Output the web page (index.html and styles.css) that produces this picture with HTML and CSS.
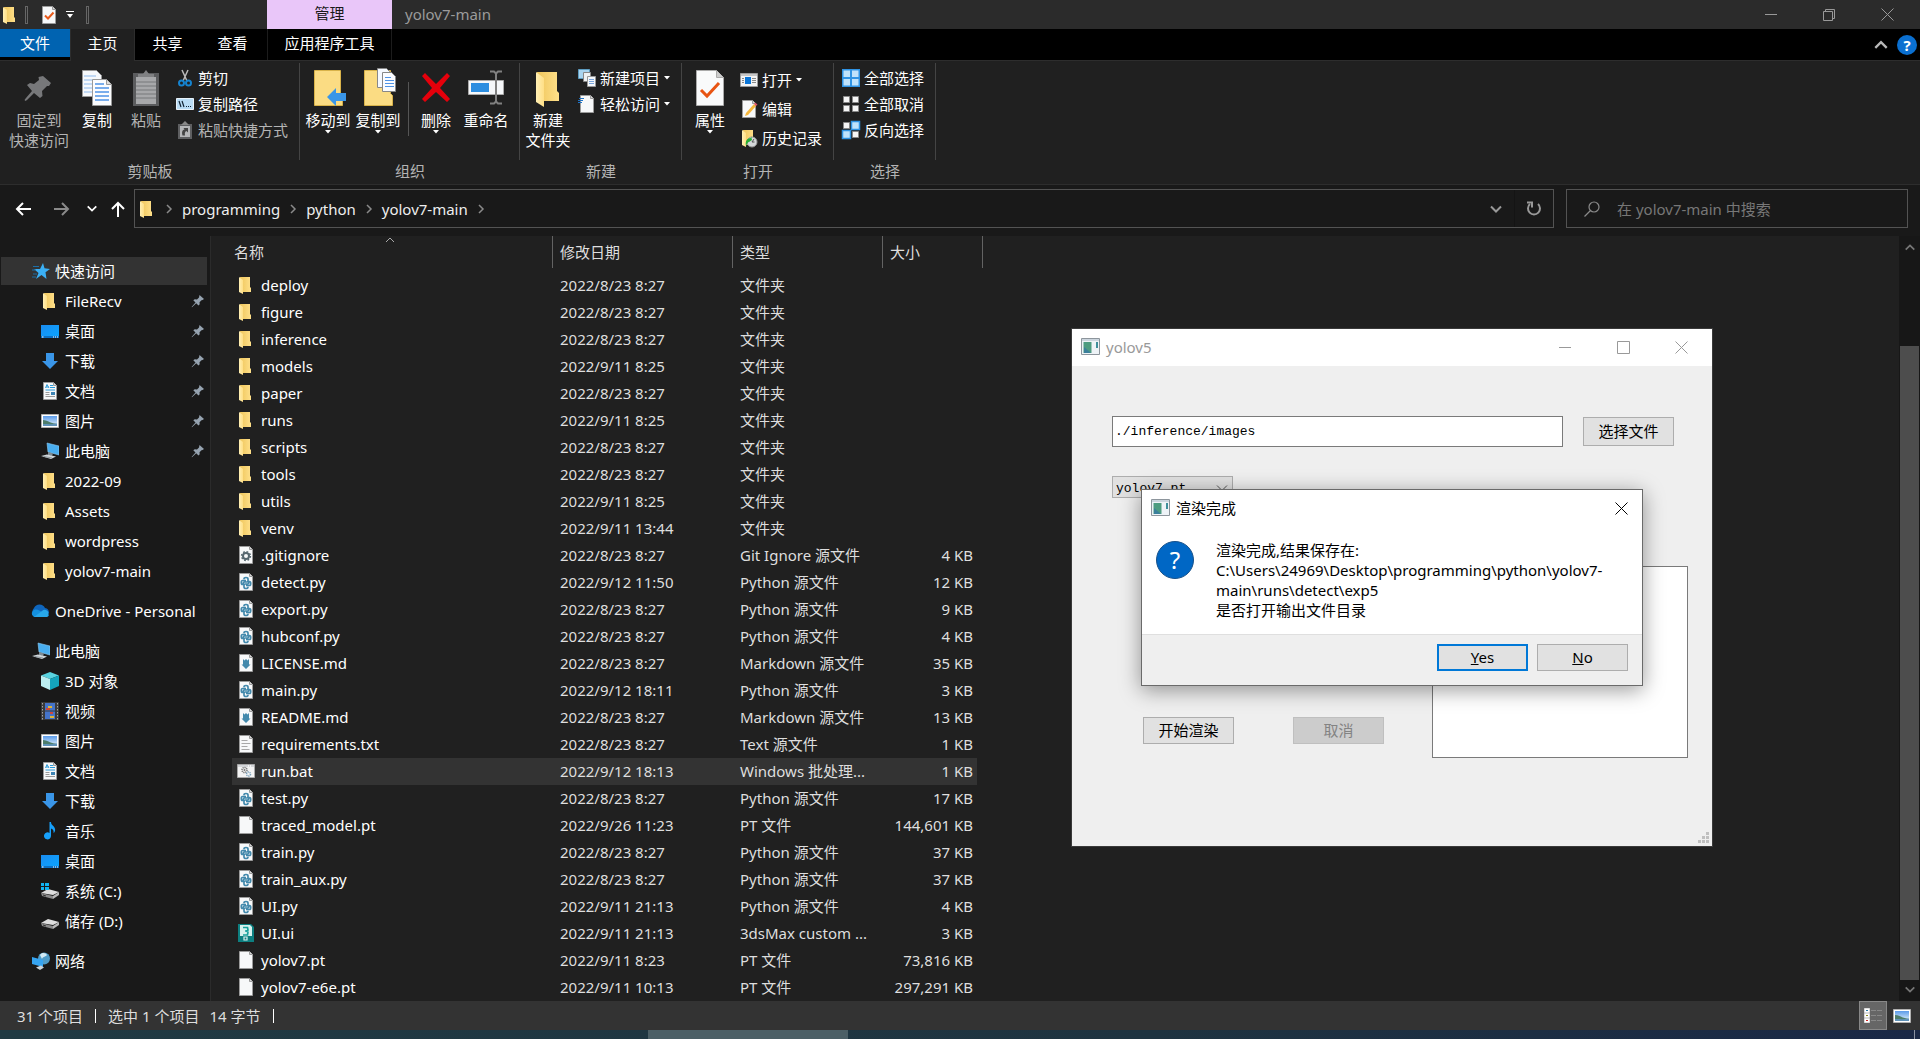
FILE: index.html
```html
<!DOCTYPE html>
<html lang="zh-CN">
<head>
    <meta charset="UTF-8">
    <meta name="viewport" content="width=device-width, initial-scale=1.0">
    <title>yolov7-main</title>
    <link rel="stylesheet" href="styles.css">
</head>
<body>
    <!-- icon sprite -->
    <svg class="sprite" aria-hidden="true">
        <defs>
            <linearGradient id="g-folder" x1="0" x2="1"><stop offset="0" stop-color="#efc65c"/><stop offset="1" stop-color="#ffe08a"/></linearGradient>
            <linearGradient id="g-flap" x1="0" x2="1"><stop offset="0" stop-color="#ffefb4"/><stop offset="1" stop-color="#ffdf86"/></linearGradient>
            <linearGradient id="g-sky" x1="0" x2="0" y1="0" y2="1"><stop offset="0" stop-color="#5b9bea"/><stop offset="1" stop-color="#e6f4fb"/></linearGradient>
            <linearGradient id="g-blue" x1="0" x2="1" y1="0" y2="1"><stop offset="0" stop-color="#1a8cf0"/><stop offset="1" stop-color="#0aa5ff"/></linearGradient>
        </defs>
        <symbol id="folder" viewBox="0 0 18 18">
            <path d="M3 1h10v10l1 1v4H4z" fill="url(#g-folder)"/>
            <path d="M2 1l4 3v14l-4-2z" fill="url(#g-flap)"/>
        </symbol>
        <symbol id="page" viewBox="0 0 18 18">
            <path d="M2.500.5h10l3 3v14h-13z" fill="#f7f8f9" stroke="#9b9b9b"/>
            <path d="M12.500.5v3h3" fill="#d8d8d8" stroke="#9b9b9b"/>
        </symbol>
        <symbol id="gear" viewBox="0 0 18 18">
            <use href="#page"/>
            <circle cx="9" cy="10" r="3" fill="none" stroke="#56676f" stroke-width="2"/>
            <circle cx="9" cy="10" r="4.400" fill="none" stroke="#56676f" stroke-width="1.500" stroke-dasharray="1.700 1.750"/>
        </symbol>
        <symbol id="py" viewBox="0 0 18 18">
            <use href="#page"/>
            <path d="M7 6.200V6q0-1.500 2-1.500T11 6v2q0 1-1 1H7.500Q6.200 9 6.200 10.500V11.500H5.500Q4.300 11.500 4.300 9.500T5.500 7.500H9" fill="none" stroke="#4389ac" stroke-width="1.700"/>
            <path d="M11 13.800V14q0 1.500-2 1.500T7 14v-2q0-1 1-1h2.500q1.300 0 1.300-1.500V8.500h.7q1.200 0 1.200 2T12.500 12.500H9" fill="none" stroke="#4389ac" stroke-width="1.700"/>
        </symbol>
        <symbol id="md" viewBox="0 0 18 18">
            <use href="#page"/>
            <path d="M6 5l1.500 1.500L9 5l1.500 1.500L12 5v5.500h1.500L9 15l-4.500-4.500H6z" fill="#4389ac"/>
        </symbol>
        <symbol id="txt" viewBox="0 0 18 18">
            <use href="#page"/>
            <path d="M4.500 5.500h6M4.500 8.500h9M4.500 11.500h6M4.500 14.500h8" stroke="#a8a8a8"/>
        </symbol>
        <symbol id="bat" viewBox="0 0 18 18">
            <path d="M.5 2.500h17v13H.5z" fill="#f4f4f4" stroke="#a8a8a8"/>
            <path d="M1 4h16" stroke="#b5b9be" stroke-dasharray="10 1 1 1"/>
            <circle cx="7.500" cy="8" r="2.500" fill="none" stroke="#777" stroke-width="1.500" stroke-dasharray="1.200 .7"/>
            <circle cx="7.500" cy="8" r="1" fill="#777"/>
            <circle cx="11.500" cy="12" r="2" fill="none" stroke="#7ea4bd" stroke-width="1.500" stroke-dasharray="1.200 .7"/>
        </symbol>
        <symbol id="max" viewBox="0 0 18 18">
            <path d="M1 0h13l3 3v15H1z" fill="#0d7f80"/>
            <path d="M3 1h10l2 2v9H3z" fill="#d7f1ee"/>
            <path d="M6 3.500h4.500L11 6l-1.500 1H8h1.500L11 8l-.5 3H6" fill="none" stroke="#16a09b" stroke-width="1.700"/>
            <path d="M7 13h3v3H7z" fill="none" stroke="#d7f1ee" stroke-width="1.200"/>
        </symbol>
        <symbol id="desktop" viewBox="0 0 18 18">
            <path d="M0 3h18v13H0z" fill="url(#g-blue)"/>
            <path d="M0 14h18v2H0z" fill="#0a6fc4"/>
            <path d="M1 15h1.500M12 15h1M14 15h1M16 15h1" stroke="#fff"/>
        </symbol>
        <symbol id="download" viewBox="0 0 18 18"><path d="M5 1h8v8h4l-8 8-8-8h4z" fill="#3a96e8"/></symbol>
        <symbol id="docs" viewBox="0 0 18 18">
            <use href="#page"/>
            <path d="M4.500 6l1.500-3.500L8 6M5 5h2.500M9 3.500h3M9 5.500h5M4.500 8h9.500" stroke="#2a9ad8" fill="none"/>
            <path d="M4.500 10.500h4M4.500 12.500h4M4.500 14.500h9.500" stroke="#9a9a9a"/>
            <path d="M10 10h4v3h-4z" fill="#3d84b4"/>
        </symbol>
        <symbol id="picture" viewBox="0 0 18 18">
            <path d="M.5 2.500h17v13H.5z" fill="#fff" stroke="#b0b0b0"/>
            <path d="M2 4h14v10H2z" fill="url(#g-sky)"/>
            <path d="M2 8c4 0 7 3 12 3.500L16 12v2H2z" fill="#4d7d6b"/>
            <path d="M2 12c5 0 9 .5 14-.5V14H2z" fill="#5f92b8"/>
        </symbol>
        <symbol id="pc" viewBox="0 0 18 18">
            <path d="M6 1l12 3v9L7 10z" fill="#49aef0" stroke="#8dcdf5" stroke-width=".6"/>
            <path d="M7 10l5 1.500-1 2.500-4-1z" fill="#7d8b95"/>
            <path d="M0 14l6-1.500 9 2-5 2.500z" fill="#cfd6da"/>
            <path d="M3 14.500l8 1.500" stroke="#8d969c"/>
        </symbol>
        <symbol id="star" viewBox="0 0 18 18">
            <path d="M11 1l1.500 5.200L18 7l-4.500 3.200L14.500 17l-5-4L4 17l2.500-6L2 7h6z" fill="#3bb0f5"/>
            <path d="M1 4.500h6M0 8h4M1 12h4M0 15h4" stroke="#1b6fa8"/>
        </symbol>
        <symbol id="cloud" viewBox="0 0 20 18">
            <path d="M5 14a5 5 0 0 1-1-8 6 6 0 0 1 11 0 5 5 0 0 1 4 5z" fill="#0f66bd"/>
            <path d="M4 15a4 4 0 0 1 1-7.500c3-.5 5 1.500 7 2.500l7 3a3 3 0 0 1-2 2z" fill="#1490df"/>
            <path d="M4 15l8-6a4 4 0 0 1 4-1 4 4 0 0 1 1 7z" fill="#28a8ea"/>
        </symbol>
        <symbol id="cube" viewBox="0 0 18 18">
            <path d="M9 0l9 3.500L9 7 0 3.500z" fill="#59d3e0"/>
            <path d="M0 3.500L9 7v11l-9-4z" fill="#bdf0f3"/>
            <path d="M18 3.500L9 7v11l9-4z" fill="#14a3bb"/>
        </symbol>
        <symbol id="video" viewBox="0 0 18 18">
            <path d="M0 0h18v18H0z" fill="#3a3a3a"/>
            <path d="M4 1h10v7.500H4zM4 9.500h10V17H4z" fill="#4574c9"/>
            <path d="M7 4h4v2H7zM9 14h4v2H9z" fill="#e2b731"/>
            <path d="M5 6h4v2H5zM9 10h3v2H9z" fill="#d0473c"/>
            <path d="M1.500 1v17M16.500 1v17" stroke="#a5a5a5" stroke-dasharray="1.500 1.500"/>
        </symbol>
        <symbol id="music" viewBox="0 0 18 18">
            <path d="M8.500 0H10c0 4 5 4 4 9-.5 1-1 2-1.500 2 .5-3-1-4-2.500-4.500V14a3.500 3.500 0 1 1-1.500-3z" fill="#16a0fb"/>
        </symbol>
        <symbol id="drive" viewBox="0 0 18 18">
            <path d="M0 11l7-4 11 3-6 3z" fill="#dedede"/>
            <path d="M0 11l12 3v3L1 14z" fill="#8b8b8b"/>
            <path d="M12 14l6-4v3l-6 4z" fill="#b9b9b9"/>
            <path d="M2 13l3 1" stroke="#333"/>
        </symbol>
        <symbol id="sysdrive" viewBox="0 0 18 18">
            <use href="#drive"/>
            <path d="M0 1h3v3H0zM4 1h4v3H4zM0 5h3v3H0zM4 5h4v3H4z" fill="#10b3f3"/>
        </symbol>
        <symbol id="network" viewBox="0 0 18 18">
            <circle cx="12" cy="6.500" r="6" fill="#4f9cc8"/>
            <path d="M8 3c2-3 6-2 7 0-1 2-4 1-5 4z" fill="#d3ebf5"/>
            <path d="M0 5l11 3v7L0 12z" fill="#35a4f1"/>
            <path d="M4 15.500l5-2 3 2-4 2.500z" fill="#c9d3d9"/>
        </symbol>
        <symbol id="pin" viewBox="0 0 14 14">
            <path d="M8.500 1l4.500 4-1.500 1-1 .2-2 2 .2 2L7.500 11.500 5.200 9.300 1 13.300.6 13 4.500 8.600 2.300 6.300l1.500-1 2.200.2 2-2z" fill="#96a3b0"/>
        </symbol>
        <symbol id="app" viewBox="0 0 19 18">
            <path d="M.5.5h18v16H.5z" fill="#eef3f7" stroke="#8d959c"/>
            <path d="M1 1h17v2H1z" fill="#cbd5de"/>
            <path d="M2.500 4h8v11h-8z" fill="#4d9c80"/>
            <path d="M3 9l7 6H3z" fill="#3b7f9b"/>
            <path d="M15 4h2v6h-2z" fill="#3f8f9c"/>
        </symbol>
        <symbol id="chev-right" viewBox="0 0 8 10"><path d="M2 1l4 4-4 4" fill="none" stroke="currentColor" stroke-width="1.500"/></symbol>
        <symbol id="chev-down" viewBox="0 0 14 10"><path d="M2 2.500l5 5 5-5" fill="none" stroke="currentColor" stroke-width="2"/></symbol>
        <symbol id="chev-up" viewBox="0 0 14 10"><path d="M2 7.500l5-5 5 5" fill="none" stroke="currentColor" stroke-width="2"/></symbol>
        <symbol id="caret" viewBox="0 0 6 4"><path d="M0 0h6L3 3.500z" fill="currentColor"/></symbol>
        <symbol id="close" viewBox="0 0 13 13"><path d="M.5.5l12 12M12.500.5l-12 12" stroke="currentColor" fill="none"/></symbol>
    </svg>

    <div class="explorer">
        <header class="titlebar">
            <div class="quick-tools">
                <svg class="icon"><use href="#folder"/></svg>
                <span class="grip"></span>
                <button class="plain" aria-label="属性">
                    <svg class="icon" viewBox="0 0 18 18"><use href="#page"/><path d="M5 9.500l3 3 5.500-6" fill="none" stroke="#e85a1b" stroke-width="2"/></svg>
                </button>
                <button class="plain" aria-label="自定义快速访问工具栏">
                    <svg width="8" height="8"><path d="M0 .5h8" stroke="#fff"/><path d="M1 3h6L4 7z" fill="#fff"/></svg>
                </button>
                <span class="grip"></span>
            </div>
            <div class="context-tab">管理</div>
            <h1 class="window-title">yolov7-main</h1>
            <div class="window-buttons">
                <button aria-label="最小化"><svg width="12" height="13"><path d="M0 6.500h12" stroke="currentColor"/></svg></button>
                <button aria-label="还原"><svg width="12" height="13"><path d="M.5 3.500h9v9h-9zM2.500 3V1.500h9v9H10" fill="none" stroke="currentColor"/></svg></button>
                <button aria-label="关闭"><svg width="13" height="13"><use href="#close"/></svg></button>
            </div>
        </header>

        <nav class="tabs">
            <a href="#" class="tab file">文件</a>
            <a href="#" class="tab active">主页</a>
            <a href="#" class="tab">共享</a>
            <a href="#" class="tab">查看</a>
            <a href="#" class="tab context">应用程序工具</a>
            <div class="tabs-end">
                <button class="plain" aria-label="最小化功能区"><svg width="16" height="12"><use href="#chev-up"/></svg></button>
                <button class="plain help" aria-label="帮助">?</button>
            </div>
        </nav>

        <section class="ribbon">
            <div class="group first">
                <div class="group-tools">
                    <button class="big wide dim">
                        <svg width="36" height="36"><path d="M22 6l8 7-2 3-2 0-5 5 .5 5-2.500 2-6-5-7 7-1.500 1-1-1 1.500-2 6-7-5-6 3-2 4 1 5-4-.5-3z" fill="#77787a"/></svg>
                        固定到<br>快速访问
                    </button>
                    <button class="big narrow">
                        <svg width="36" height="36">
                            <path d="M3.500.5h14l5 5v21h-19z" fill="#f7f9fc" stroke="#999"/>
                            <path d="M5 6h12M5 10h14M5 14h14M5 18h14M5 22h14" stroke="#8db9ec"/>
                            <path d="M13.500 9.500h14l5 5v21h-19z" fill="#fbfcfe" stroke="#999"/>
                            <path d="M27.500 9.500v5h5" fill="#ddd" stroke="#999"/>
                            <path d="M16 14h9M16 18h14M16 22h14M16 26h14M16 30h14" stroke="#4f93e6" stroke-width="1.500"/>
                        </svg>
                        复制
                    </button>
                    <button class="big dim paste">
                        <svg width="36" height="36">
                            <path d="M5 3h26v33H5z" fill="#5b5c5e"/>
                            <path d="M8 7h20v27H8z" fill="#a7a8aa"/>
                            <path d="M8 12h20M8 16h20M8 20h20M8 24h20M8 28h20" stroke="#77787a"/>
                            <path d="M10 7V4h5l3-4 3 4h5v3z" fill="#808183"/>
                        </svg>
                        粘贴
                    </button>
                    <div class="small-list">
                        <button class="small">
                            <svg class="icon"><path d="M6 1l5 11M12 1L7 12" stroke="#bbb" stroke-width="1.500"/><circle cx="5.500" cy="14" r="2.500" fill="none" stroke="#1583cf" stroke-width="2"/><circle cx="12.500" cy="14" r="2.500" fill="none" stroke="#1583cf" stroke-width="2"/></svg>
                            剪切
                        </button>
                        <button class="small">
                            <svg class="icon"><path d="M.5 3.500h17v11H.5z" fill="#b9dcf5" stroke="#e8f3fb"/><path d="M3 6l2 6M6 6l2 6" stroke="#123" stroke-width="1.200"/><path d="M10 11.500h1M12 11.500h1M14 11.500h1" stroke="#123"/></svg>
                            复制路径
                        </button>
                        <button class="small dim">
                            <svg class="icon"><path d="M2 3h14v15H2z" fill="#5e5f61"/><path d="M4 5h10v11H4z" fill="#b5b6b8"/><path d="M5 4l4-4 4 4z" fill="#888"/><path d="M6.500 14.500c-1-4 0-5.500 2-6L7.500 7H12v4.500L10.500 10C9 10.500 8.500 12 9 14.500z" fill="#444"/></svg>
                            粘贴快捷方式
                        </button>
                    </div>
                </div>
                <div class="group-label">剪贴板</div>
            </div>

            <div class="group">
                <div class="group-tools">
                    <button class="big">
                        <svg width="36" height="36"><path d="M4.500.5h26v23l2 2v10h-28z" fill="#fbdc83" stroke="#d9b34a"/><path d="M17 27l9-9v5h10v8H26v5z" fill="#3a96e8"/></svg>
                        移动到
                        <svg width="6" height="4"><use href="#caret"/></svg>
                    </button>
                    <button class="big">
                        <svg width="36" height="36"><path d="M4.500.5h26v23l2 2v10h-28z" fill="#fbdc83" stroke="#d9b34a"/><path d="M17.500-1.500h9l3 3v16h-12z" fill="#f5f9ff" stroke="#888"/><path d="M22.500 2.500h9l4 4v15h-13z" fill="#fafcff" stroke="#888"/><path d="M25 7.500h6M25 10.500h9M25 13.500h9M25 16.500h9" stroke="#4f93e6"/></svg>
                        复制到
                        <svg width="6" height="4"><use href="#caret"/></svg>
                    </button>
                    <span class="tool-sep"></span>
                    <button class="big">
                        <svg width="36" height="36"><path d="M4 6l3-3 11 11L29 3l3 3-10 12 10 11-3 3-11-10L7 32l-3-3 10-11z" fill="#e5000b"/></svg>
                        删除
                        <svg width="6" height="4"><use href="#caret"/></svg>
                    </button>
                    <button class="big">
                        <svg width="36" height="36"><path d="M.5 10.500h35v14H.5z" fill="#f5f7f9" stroke="#aaa"/><path d="M3 13h18v9H3z" fill="#2b8de0"/><path d="M22 1.500h4l2 2 2-2h4M22 33.500h4l2-2 2 2h4M28 3v29" fill="none" stroke="#808080" stroke-width="2"/></svg>
                        重命名
                    </button>
                </div>
                <div class="group-label">组织</div>
            </div>

            <div class="group">
                <div class="group-tools">
                    <button class="big">
                        <svg width="36" height="36"><path d="M7 2h20v19l2 2v8H8z" fill="url(#g-folder)"/><path d="M6 2l8 6v29l-8-5z" fill="url(#g-flap)"/></svg>
                        新建<br>文件夹
                    </button>
                    <div class="small-list">
                        <button class="small">
                            <svg class="icon"><path d="M.5.500h11v9H.5z" fill="#a9d4ef" stroke="#5d9cc0"/><path d="M5.500 3.500h7v9h-7z" fill="#eef1f3" stroke="#888"/><path d="M9.500 7.500h8v10h-8z" fill="#f5f8fb" stroke="#999"/><path d="M11 10.500h5M11 12.500h5M11 14.500h5" stroke="#7aa5dc"/></svg>
                            新建项目
                            <svg width="6" height="4"><use href="#caret"/></svg>
                        </button>
                        <button class="small">
                            <svg class="icon"><use href="#page"/><path d="M1 3.500h5M0 5.500h5M0 7.500h4" stroke="#1f72c4"/></svg>
                            轻松访问
                            <svg width="6" height="4"><use href="#caret"/></svg>
                        </button>
                    </div>
                </div>
                <div class="group-label">新建</div>
            </div>

            <div class="group">
                <div class="group-tools">
                    <button class="big">
                        <svg width="36" height="36"><path d="M4.500.5h20l7 7v28h-27z" fill="#f9fafb" stroke="#aaa"/><path d="M24.500.5v7h7" fill="#ccc" stroke="#aaa"/><path d="M9 20l6 6 12-13" fill="none" stroke="#e85413" stroke-width="3"/></svg>
                        属性
                        <svg width="6" height="4"><use href="#caret"/></svg>
                    </button>
                    <div class="small-list loose">
                        <button class="small">
                            <svg class="icon"><path d="M.5 2.500h17v13H.5z" fill="#f3f3f3" stroke="#9a9a9a"/><path d="M1 4h16" stroke="#9a9a9a"/><path d="M5 6h6v7H5z" fill="#0b76d8"/><path d="M2 7.500h2M2 9.500h2M2 11.500h2M12 7.500h4M12 9.500h4M12 11.500h4" stroke="#888"/></svg>
                            打开
                            <svg width="6" height="4"><use href="#caret"/></svg>
                        </button>
                        <button class="small">
                            <svg class="icon"><use href="#page"/><path d="M6 13L14 4l2 2-8 9-3 1z" fill="#f6b73c"/><path d="M14 4l1-1.500 2.500 2L16 6z" fill="#e0556a"/></svg>
                            编辑
                        </button>
                        <button class="small">
                            <svg class="icon"><use href="#folder"/><circle cx="12" cy="13" r="5" fill="#d5d8da" stroke="#999"/><path d="M12 13l2-3M12 13h2.500" stroke="#555"/><path d="M6 17c-1-5 1-8 5-8v-2l1 4-3 2c-1 0-2 2-3 4z" fill="#27ae35"/></svg>
                            历史记录
                        </button>
                    </div>
                </div>
                <div class="group-label">打开</div>
            </div>

            <div class="group">
                <div class="group-tools">
                    <div class="small-list">
                        <button class="small">
                            <svg class="icon"><path d="M0 0h18v18H0z" fill="#2f93e4"/><path d="M1.500 1.500h6.500v6.500H1.500zM10 1.500h6.500v6.500H10zM1.500 10h6.500v6.500H1.500zM10 10h6.500v6.500H10z" fill="#bfe2fb"/></svg>
                            全部选择
                        </button>
                        <button class="small">
                            <svg class="icon"><path d="M1.500 1.500h6v6h-6zM10.500 1.500h6v6h-6zM1.500 10.500h6v6h-6zM10.500 10.500h6v6h-6z" fill="#f5f5f5" stroke="#888"/></svg>
                            全部取消
                        </button>
                        <button class="small">
                            <svg class="icon"><path d="M1.500 1.500h6v6h-6zM10.500 10.500h6v6h-6z" fill="#f5f5f5" stroke="#888"/><path d="M9.500.5h8v8h-8zM.5 9.500h8v8h-8z" fill="#bfe2fb" stroke="#2f93e4" stroke-width="1.500"/></svg>
                            反向选择
                        </button>
                    </div>
                </div>
                <div class="group-label">选择</div>
            </div>
        </section>

        <div class="navbar">
            <button class="plain back" aria-label="后退"><svg width="16" height="14"><path d="M16 7H2M8 1L2 7l6 6" fill="none" stroke="#fff" stroke-width="2"/></svg></button>
            <button class="plain forward" aria-label="前进"><svg width="16" height="14"><path d="M0 7h14M8 1l6 6-6 6" fill="none" stroke="#8a8a8a" stroke-width="2"/></svg></button>
            <button class="plain recent" aria-label="最近浏览的位置"><svg width="12" height="9"><use href="#chev-down"/></svg></button>
            <button class="plain up" aria-label="上移"><svg width="14" height="16"><path d="M7 16V2M1 8l6-6 6 6" fill="none" stroke="#fff" stroke-width="2"/></svg></button>
            <div class="address">
                <svg class="icon"><use href="#folder"/></svg>
                <svg class="crumb-sep"><use href="#chev-right"/></svg>
                <a href="#">programming</a>
                <svg class="crumb-sep"><use href="#chev-right"/></svg>
                <a href="#">python</a>
                <svg class="crumb-sep"><use href="#chev-right"/></svg>
                <a href="#">yolov7-main</a>
                <svg class="crumb-sep"><use href="#chev-right"/></svg>
                <div class="address-end">
                    <button class="plain" aria-label="以前的位置"><svg width="14" height="10"><use href="#chev-down"/></svg></button>
                    <button class="plain refresh" aria-label="刷新"><svg width="16" height="16"><path d="M12 3a6 6 0 1 1-8 0" fill="none" stroke="currentColor" stroke-width="2"/><path d="M1 1.500h5v5" fill="none" stroke="currentColor" stroke-width="2"/></svg></button>
                </div>
            </div>
            <div class="search">
                <svg width="16" height="16"><circle cx="10" cy="6" r="5" fill="none" stroke="currentColor" stroke-width="1.200"/><path d="M6.500 9.500L.5 15.500" stroke="currentColor" stroke-width="1.200"/></svg>
                <input type="search" aria-label="搜索" placeholder="在 yolov7-main 中搜索">
            </div>
        </div>

        <main class="content">
            <aside class="sidebar">
                <div class="side-group">
                    <a href="#" class="side-item root active"><svg class="icon"><use href="#star"/></svg>快速访问</a>
                    <a href="#" class="side-item"><svg class="icon"><use href="#folder"/></svg>FileRecv<svg class="pin"><use href="#pin"/></svg></a>
                    <a href="#" class="side-item"><svg class="icon"><use href="#desktop"/></svg>桌面<svg class="pin"><use href="#pin"/></svg></a>
                    <a href="#" class="side-item"><svg class="icon"><use href="#download"/></svg>下载<svg class="pin"><use href="#pin"/></svg></a>
                    <a href="#" class="side-item"><svg class="icon"><use href="#docs"/></svg>文档<svg class="pin"><use href="#pin"/></svg></a>
                    <a href="#" class="side-item"><svg class="icon"><use href="#picture"/></svg>图片<svg class="pin"><use href="#pin"/></svg></a>
                    <a href="#" class="side-item"><svg class="icon"><use href="#pc"/></svg>此电脑<svg class="pin"><use href="#pin"/></svg></a>
                    <a href="#" class="side-item"><svg class="icon"><use href="#folder"/></svg>2022-09</a>
                    <a href="#" class="side-item"><svg class="icon"><use href="#folder"/></svg>Assets</a>
                    <a href="#" class="side-item"><svg class="icon"><use href="#folder"/></svg>wordpress</a>
                    <a href="#" class="side-item"><svg class="icon"><use href="#folder"/></svg>yolov7-main</a>
                </div>
                <div class="side-group">
                    <a href="#" class="side-item root"><svg class="icon cloud"><use href="#cloud"/></svg>OneDrive - Personal</a>
                </div>
                <div class="side-group">
                    <a href="#" class="side-item root"><svg class="icon"><use href="#pc"/></svg>此电脑</a>
                    <a href="#" class="side-item"><svg class="icon"><use href="#cube"/></svg>3D 对象</a>
                    <a href="#" class="side-item"><svg class="icon"><use href="#video"/></svg>视频</a>
                    <a href="#" class="side-item"><svg class="icon"><use href="#picture"/></svg>图片</a>
                    <a href="#" class="side-item"><svg class="icon"><use href="#docs"/></svg>文档</a>
                    <a href="#" class="side-item"><svg class="icon"><use href="#download"/></svg>下载</a>
                    <a href="#" class="side-item"><svg class="icon"><use href="#music"/></svg>音乐</a>
                    <a href="#" class="side-item"><svg class="icon"><use href="#desktop"/></svg>桌面</a>
                    <a href="#" class="side-item"><svg class="icon"><use href="#sysdrive"/></svg>系统 (C:)</a>
                    <a href="#" class="side-item"><svg class="icon"><use href="#drive"/></svg>储存 (D:)</a>
                </div>
                <div class="side-group">
                    <a href="#" class="side-item root"><svg class="icon"><use href="#network"/></svg>网络</a>
                </div>
            </aside>

            <section class="files">
                <table class="file-table">
                    <colgroup><col class="col-name"><col class="col-date"><col class="col-type"><col class="col-size"></colgroup>
                    <thead>
                        <tr>
                            <th class="sorted">名称<svg class="sort-mark" width="10" height="6"><path d="M1 5l4-4 4 4" fill="none" stroke="#aaa"/></svg></th>
                            <th>修改日期</th><th>类型</th><th>大小</th>
                        </tr>
                    </thead>
                    <tbody>
                        <tr><td><svg class="icon"><use href="#folder"/></svg>deploy</td><td>2022/8/23 8:27</td><td>文件夹</td><td></td></tr>
                        <tr><td><svg class="icon"><use href="#folder"/></svg>figure</td><td>2022/8/23 8:27</td><td>文件夹</td><td></td></tr>
                        <tr><td><svg class="icon"><use href="#folder"/></svg>inference</td><td>2022/8/23 8:27</td><td>文件夹</td><td></td></tr>
                        <tr><td><svg class="icon"><use href="#folder"/></svg>models</td><td>2022/9/11 8:25</td><td>文件夹</td><td></td></tr>
                        <tr><td><svg class="icon"><use href="#folder"/></svg>paper</td><td>2022/8/23 8:27</td><td>文件夹</td><td></td></tr>
                        <tr><td><svg class="icon"><use href="#folder"/></svg>runs</td><td>2022/9/11 8:25</td><td>文件夹</td><td></td></tr>
                        <tr><td><svg class="icon"><use href="#folder"/></svg>scripts</td><td>2022/8/23 8:27</td><td>文件夹</td><td></td></tr>
                        <tr><td><svg class="icon"><use href="#folder"/></svg>tools</td><td>2022/8/23 8:27</td><td>文件夹</td><td></td></tr>
                        <tr><td><svg class="icon"><use href="#folder"/></svg>utils</td><td>2022/9/11 8:25</td><td>文件夹</td><td></td></tr>
                        <tr><td><svg class="icon"><use href="#folder"/></svg>venv</td><td>2022/9/11 13:44</td><td>文件夹</td><td></td></tr>
                        <tr><td><svg class="icon"><use href="#gear"/></svg>.gitignore</td><td>2022/8/23 8:27</td><td>Git Ignore 源文件</td><td>4 KB</td></tr>
                        <tr><td><svg class="icon"><use href="#py"/></svg>detect.py</td><td>2022/9/12 11:50</td><td>Python 源文件</td><td>12 KB</td></tr>
                        <tr><td><svg class="icon"><use href="#py"/></svg>export.py</td><td>2022/8/23 8:27</td><td>Python 源文件</td><td>9 KB</td></tr>
                        <tr><td><svg class="icon"><use href="#py"/></svg>hubconf.py</td><td>2022/8/23 8:27</td><td>Python 源文件</td><td>4 KB</td></tr>
                        <tr><td><svg class="icon"><use href="#md"/></svg>LICENSE.md</td><td>2022/8/23 8:27</td><td>Markdown 源文件</td><td>35 KB</td></tr>
                        <tr><td><svg class="icon"><use href="#py"/></svg>main.py</td><td>2022/9/12 18:11</td><td>Python 源文件</td><td>3 KB</td></tr>
                        <tr><td><svg class="icon"><use href="#md"/></svg>README.md</td><td>2022/8/23 8:27</td><td>Markdown 源文件</td><td>13 KB</td></tr>
                        <tr><td><svg class="icon"><use href="#txt"/></svg>requirements.txt</td><td>2022/8/23 8:27</td><td>Text 源文件</td><td>1 KB</td></tr>
                        <tr class="selected"><td><svg class="icon"><use href="#bat"/></svg>run.bat</td><td>2022/9/12 18:13</td><td>Windows 批处理...</td><td>1 KB</td></tr>
                        <tr><td><svg class="icon"><use href="#py"/></svg>test.py</td><td>2022/8/23 8:27</td><td>Python 源文件</td><td>17 KB</td></tr>
                        <tr><td><svg class="icon"><use href="#page"/></svg>traced_model.pt</td><td>2022/9/26 11:23</td><td>PT 文件</td><td>144,601 KB</td></tr>
                        <tr><td><svg class="icon"><use href="#py"/></svg>train.py</td><td>2022/8/23 8:27</td><td>Python 源文件</td><td>37 KB</td></tr>
                        <tr><td><svg class="icon"><use href="#py"/></svg>train_aux.py</td><td>2022/8/23 8:27</td><td>Python 源文件</td><td>37 KB</td></tr>
                        <tr><td><svg class="icon"><use href="#py"/></svg>UI.py</td><td>2022/9/11 21:13</td><td>Python 源文件</td><td>4 KB</td></tr>
                        <tr><td><svg class="icon"><use href="#max"/></svg>UI.ui</td><td>2022/9/11 21:13</td><td>3dsMax custom ...</td><td>3 KB</td></tr>
                        <tr><td><svg class="icon"><use href="#page"/></svg>yolov7.pt</td><td>2022/9/11 8:23</td><td>PT 文件</td><td>73,816 KB</td></tr>
                        <tr><td><svg class="icon"><use href="#page"/></svg>yolov7-e6e.pt</td><td>2022/9/11 10:13</td><td>PT 文件</td><td>297,291 KB</td></tr>
                    </tbody>
                </table>
            </section>

            <div class="scrollbar">
                <svg width="12" height="9"><use href="#chev-up"/></svg>
                <div class="track"><div class="thumb"></div></div>
                <svg width="12" height="9"><use href="#chev-down"/></svg>
            </div>
        </main>

        <footer class="statusbar">
            <span>31 个项目</span>
            <span class="status-sep"></span>
            <span>选中 1 个项目</span>
            <span class="status-size">14 字节</span>
            <span class="status-sep"></span>
            <div class="views">
                <button class="view active" aria-label="详细信息">
                    <svg class="icon"><path d="M.5 1.500h5v4h-5zM.5 6.500h5v4h-5zM.5 11.500h5v4h-5z" fill="#fff" stroke="#ddd"/><path d="M2 3h2v1H2z" fill="#2a7ba8"/><path d="M2 8h2v1H2z" fill="#8a8a20"/><path d="M2 13h2v1H2z" fill="#c22"/><path d="M7 3.500h5M13 3.500h5M7 8.500h5M13 8.500h5M7 13.500h5M13 13.500h5" stroke="#888"/></svg>
                </button>
                <button class="view" aria-label="大缩略图"><svg class="icon"><use href="#picture"/></svg></button>
            </div>
        </footer>
    </div>

    <div class="taskbar"><div class="task-active"></div><div class="show-desktop"></div></div>

    <!-- detection tool window -->
    <section class="window tool-window">
        <header class="window-head inactive">
            <svg width="19" height="18"><use href="#app"/></svg>
            <h2>yolov5</h2>
            <div class="window-buttons">
                <button aria-label="最小化"><svg width="12" height="13"><path d="M0 6.500h12" stroke="currentColor"/></svg></button>
                <button aria-label="最大化"><svg width="13" height="13"><path d="M.5.5h12v12H.5z" fill="none" stroke="currentColor"/></svg></button>
                <button aria-label="关闭"><svg width="13" height="13"><use href="#close"/></svg></button>
            </div>
        </header>
        <form class="tool-body">
            <div class="path-row">
                <input class="path-input" type="text" aria-label="文件路径" value="./inference/images">
                <button type="button" class="qt-button">选择文件</button>
            </div>
            <div class="weights">
                <select aria-label="权重"><option>yolov7.pt</option></select>
                <svg width="12" height="9"><path d="M1 1.500l5 5 5-5" fill="none" stroke="#555"/></svg>
            </div>
            <div class="run-row">
                <button type="button" class="qt-button">开始渲染</button>
                <button type="button" class="qt-button" disabled>取消</button>
                <div class="log"></div>
            </div>
        </form>
        <svg class="size-grip" width="11" height="11"><path d="M8 0h3v3H8zM4 4h3v3H4zM8 4h3v3H8zM0 8h3v3H0zM4 8h3v3H4zM8 8h3v3H8z" fill="#bfbfbf"/></svg>
    </section>

    <!-- finished message -->
    <section class="window message" role="dialog" aria-labelledby="message-title">
        <header class="window-head">
            <svg width="19" height="18"><use href="#app"/></svg>
            <h2 id="message-title">渲染完成</h2>
            <button class="plain close" aria-label="关闭"><svg width="13" height="13"><use href="#close"/></svg></button>
        </header>
        <div class="message-body">
            <div class="question">?</div>
            <p>渲染完成,结果保存在:<br>C:\Users\24969\Desktop\programming\python\yolov7-<br>main\runs\detect\exp5<br>是否打开输出文件目录</p>
        </div>
        <footer class="message-buttons">
            <button class="qt-button default"><u>Y</u>es</button>
            <button class="qt-button"><u>N</u>o</button>
        </footer>
    </section>
</body>
</html>
```
FILE: styles.css
```css
* {
    margin: 0;
    padding: 0;
    box-sizing: border-box;
}

body {
    min-height: 100vh;
    display: flex;
    flex-direction: column;
    position: relative;
    overflow: hidden;
    background-color: #191919;
    color: #fff;
    font: 15px/20px "Noto Sans", "Noto Sans CJK SC", sans-serif;
}

button, input, select {
    font: inherit;
    color: inherit;
    border: none;
    border-radius: 0;
    background: none;
}

a {
    color: inherit;
    text-decoration: none;
}

svg {
    display: block;
    flex: none;
}

.sprite {
    position: absolute;
    width: 0;
    height: 0;
}

.icon {
    width: 18px;
    height: 18px;
    overflow: visible;
}

.plain {
    display: flex;
    align-items: center;
    justify-content: center;
}

.explorer {
    flex: 1;
    display: flex;
    flex-direction: column;
}

/* title bar */
.titlebar {
    display: flex;
    height: 29px;
    background-color: #2b2b2b;
}

.quick-tools {
    width: 267px;
    display: flex;
    align-items: center;
    padding-left: 1px;
}

.grip {
    width: 3px;
    height: 18px;
    margin: 0 6px;
    border: 1px solid #666;
}

.quick-tools .plain {
    margin-left: 8px;
}

.quick-tools .grip + .plain {
    margin-left: 6px;
}

.quick-tools .plain + .grip {
    margin-left: 12px;
}

.context-tab {
    width: 125px;
    text-align: center;
    line-height: 26px;
    background-color: #e9c6f9;
    color: #1a1a1a;
}

.window-title {
    flex: 1;
    padding-left: 13px;
    font-size: 15px;
    font-weight: normal;
    line-height: 28px;
    color: #9b9b9b;
}

.window-buttons {
    display: flex;
    margin-right: 4px;
    color: #999;
}

.window-buttons button {
    width: 58px;
    display: flex;
    align-items: center;
    justify-content: center;
}

/* ribbon tabs */
.tabs {
    display: flex;
    height: 31px;
    background-color: #000;
}

.tab {
    width: 65px;
    text-align: center;
    line-height: 28px;
}

.tab.file {
    width: 70px;
    height: 28px;
    background-color: #0063b1;
}

.tab.active {
    background-color: #202020;
    height: 32px;
    border: 1px solid #2d2d2d;
    border-width: 0 1px;
    z-index: 1;
}

.tab.context {
    width: 125px;
    margin-left: 2px;
    border: 1px solid #1c1c1c;
    border-width: 0 1px;
}

.tabs-end {
    margin-left: auto;
    padding-right: 3px;
    display: flex;
    align-items: center;
    gap: 8px;
    color: #b8b8b8;
}

.help {
    width: 20px;
    height: 20px;
    border-radius: 50%;
    background-color: #0a6fd0;
    color: #fff;
    font-weight: bold;
}

/* ribbon */
.ribbon {
    display: flex;
    background-color: #202020;
    border: 1px solid #2d2d2d;
    border-width: 1px 0;
}

.group-tools {
    display: flex;
    height: 97px;
    margin-top: 2px;
    padding: 0 11px 0 3px;
    border-right: 1px solid #444;
}

.group.first .group-tools {
    padding-left: 0;
}

.group:nth-child(2) .group-tools {
    padding-right: 8px;
}

.group-label {
    text-align: center;
    line-height: 22px;
    padding-bottom: 2px;
    color: #b4b4b4;
}

.big {
    width: 50px;
    padding-top: 7px;
    display: block;
    text-align: center;
    align-self: flex-start;
    white-space: nowrap;
}

.big svg {
    margin: 0 auto;
}

.big svg:first-child {
    margin-bottom: 4px;
    overflow: visible;
}

.big.wide {
    width: 78px;
}

.big.narrow {
    width: 38px;
}

.paste {
    margin-left: 5px;
}

.dim {
    color: #b4b4b4;
}

.tool-sep {
    width: 1px;
    height: 54px;
    margin: 19px 2px 0 5px;
    background-color: #555;
}

.small-list {
    margin-left: 5px;
    padding-top: 2px;
}

.small {
    display: flex;
    align-items: center;
    gap: 4px;
    height: 26px;
}

.loose .small {
    height: 29px;
}

/* address row */
.navbar {
    display: flex;
    align-items: center;
    height: 51px;
    padding: 0 12px 4px 4px;
}

.back {
    width: 38px;
}

.forward {
    width: 40px;
}

.recent {
    width: 20px;
}

.up {
    width: 32px;
}

.address {
    flex: 1;
    display: flex;
    align-items: center;
    height: 39px;
    padding-left: 3px;
    border: 1px solid #535353;
}

.address a {
    color: #eee;
}

.crumb-sep {
    width: 8px;
    height: 10px;
    margin: 0 9px;
    color: #8a8a8a;
}

.address-end {
    align-self: stretch;
    margin-left: auto;
    display: flex;
    color: #999;
}

.address-end .plain {
    width: 36px;
}

.address-end .refresh {
    border-left: 1px solid #141414;
    width: 39px;
}

.search {
    display: flex;
    align-items: center;
    width: 342px;
    height: 39px;
    margin-left: 12px;
    padding-left: 17px;
    gap: 17px;
    border: 1px solid #535353;
    color: #8a8a8a;
}

.search input {
    flex: 1;
    min-width: 0;
    outline: none;
}

.search input::placeholder {
    color: #777;
}

/* content */
.content {
    flex: 1;
    display: flex;
}

.sidebar {
    width: 211px;
    padding: 21px 3px 0 1px;
    border-right: 1px solid #2b2b2b;
}

.side-group {
    margin-bottom: 12px;
}

.side-item {
    display: flex;
    align-items: center;
    gap: 6px;
    height: 28px;
    margin-bottom: 2px;
    padding-left: 40px;
    white-space: nowrap;
}

.side-item.root {
    padding-left: 31px;
    gap: 5px;
}

.side-item.active {
    background-color: #333;
}

.cloud {
    width: 20px;
    margin-left: -2px;
}

.pin {
    width: 14px;
    height: 14px;
    margin: 0 2px 0 auto;
}

.files {
    flex: 1;
    padding-left: 21px;
    background-color: #202020;
}

.file-table {
    table-layout: fixed;
    width: 745px;
    border-spacing: 0;
    color: #dedede;
}

.col-name {
    width: 321px;
}

.col-date {
    width: 180px;
}

.col-type {
    width: 150px;
}

.file-table th {
    position: relative;
    height: 36px;
    padding: 0 0 4px 7px;
    text-align: left;
    font-weight: normal;
}

.file-table th:first-child {
    padding-left: 2px;
}

.file-table th::after {
    content: "";
    position: absolute;
    top: 0;
    right: 0;
    width: 1px;
    height: 32px;
    background-color: #636363;
}

.file-table th:last-child::after {
    right: -6px;
}

.sort-mark {
    position: absolute;
    top: 1px;
    left: 50%;
    margin-left: -8px;
}

.file-table td {
    height: 27px;
    padding: 0 0 2px 7px;
    white-space: nowrap;
}

.file-table td:first-child {
    display: flex;
    align-items: center;
    gap: 6px;
    padding-left: 5px;
    color: #fff;
}

.file-table td:last-child {
    padding: 0 4px 2px 0;
    text-align: right;
}

.selected td {
    background-color: #333;
}

.scrollbar {
    width: 21px;
    display: flex;
    flex-direction: column;
    align-items: center;
    padding: 7px 0;
    background-color: #171717;
    color: #777;
}

.track {
    flex: 1;
    width: 19px;
    padding: 94px 0 5px;
}

.thumb {
    height: 100%;
    background-color: #4d4d4d;
}

/* status bar */
.statusbar {
    display: flex;
    align-items: center;
    height: 29px;
    padding: 0 4px 0 17px;
    background-color: #333;
    color: #dedede;
}

.status-sep {
    width: 1px;
    height: 14px;
    margin: 0 12px;
    background-color: #fff;
}

.status-size {
    margin-left: 10px;
}

.views {
    display: flex;
    margin-left: auto;
}

.view {
    width: 28px;
    height: 29px;
    display: flex;
    align-items: center;
    justify-content: center;
}

.view.active {
    margin-right: 1px;
    background-color: #666;
    border: 1px solid #888;
}

.taskbar {
    display: flex;
    height: 9px;
    background: linear-gradient(90deg, #203a43, #1e3340 60%, #1a2846);
}

.task-active {
    width: 200px;
    margin-left: 648px;
    background-color: #4c5f66;
}

.show-desktop {
    width: 1px;
    margin: 0 5px 0 auto;
    background-color: #8a92a2;
}

/* floating windows */
.window {
    position: absolute;
    display: flex;
    flex-direction: column;
    background-color: #efefef;
    color: #000;
}

.window-head {
    display: flex;
    align-items: center;
    gap: 6px;
    height: 37px;
    padding: 0 2px 1px 9px;
    background-color: #fff;
}

.window-head h2 {
    flex: 1;
    font-size: 15px;
    font-weight: normal;
}

.window-head.inactive {
    color: #999;
}

.window-head .window-buttons {
    align-self: stretch;
    margin-right: 0;
}

.tool-window {
    top: 328px;
    left: 1071px;
    width: 642px;
    height: 519px;
    border: 1px solid #3a3a3a;
}

.tool-body {
    padding: 50px 24px 0 40px;
}

.path-row {
    display: flex;
    align-items: center;
    gap: 20px;
    padding-right: 14px;
}

.path-input {
    flex: 1;
    min-width: 0;
    height: 31px;
    padding-left: 2px;
    background-color: #fff;
    border: 1px solid #7a7a7a;
    font-family: "Liberation Mono", monospace;
    font-size: 13px;
}

.qt-button {
    width: 91px;
    height: 27px;
    padding-bottom: 1px;
    background-color: #e1e1e1;
    border: 1px solid #adadad;
}

.path-row .qt-button {
    height: 29px;
}

.qt-button:disabled {
    background-color: #ccc;
    border-color: #bfbfbf;
    color: #838383;
}

.weights {
    position: relative;
    width: 121px;
    margin-top: 29px;
}

.weights select {
    display: block;
    width: 100%;
    height: 22px;
    padding: 2px 0 0 3px;
    appearance: none;
    background-color: #e1e1e1;
    border: 1px solid #adadad;
    font-family: "Liberation Mono", monospace;
    font-size: 13px;
}

.weights svg {
    position: absolute;
    top: 8px;
    right: 5px;
}

.run-row {
    display: flex;
    align-items: flex-end;
    margin-top: 68px;
    padding-left: 31px;
}

.run-row .qt-button {
    margin: 0 59px 14px 0;
}

.log {
    width: 256px;
    height: 192px;
    margin-left: auto;
    background-color: #fff;
    border: 1px solid #7a7a7a;
}

.run-row .qt-button:disabled {
    margin-right: 0;
}

.size-grip {
    position: absolute;
    right: 3px;
    bottom: 3px;
}

.message {
    top: 489px;
    left: 1141px;
    width: 502px;
    border: 1px solid #6a6a6a;
    box-shadow: 0 4px 20px rgba(0, 0, 0, 0.4);
}

.message .close {
    width: 38px;
    height: 36px;
}

.message-body {
    display: flex;
    gap: 22px;
    padding: 13px 0 14px 14px;
    background-color: #fff;
    border-bottom: 1px solid #dfdfdf;
}

.question {
    width: 38px;
    height: 38px;
    margin-top: 1px;
    border: 1px solid #17518a;
    border-radius: 50%;
    background-color: #0067c5;
    color: #fff;
    text-align: center;
    font-size: 24px;
    line-height: 36px;
}

.message-buttons {
    display: flex;
    justify-content: flex-end;
    gap: 9px;
    padding: 9px 14px 14px;
}

.qt-button.default {
    border: 2px solid #0078d7;
}
```
